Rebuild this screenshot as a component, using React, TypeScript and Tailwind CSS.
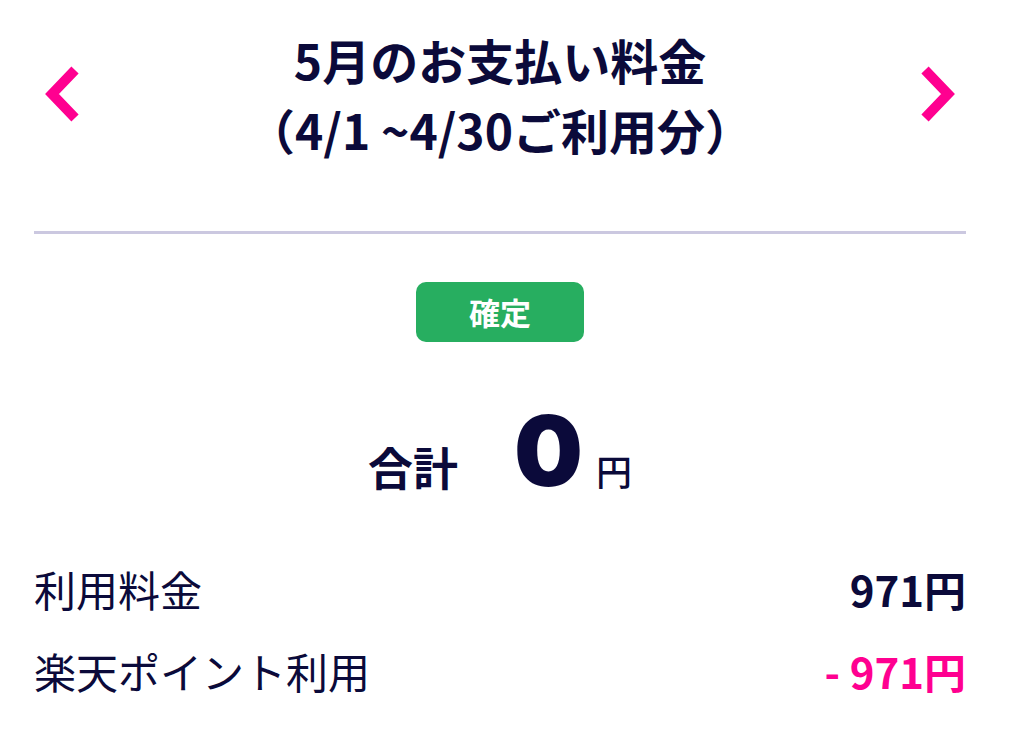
const jp = { fontFamily: '"Noto Sans CJK JP", "Noto Sans", sans-serif' }

function Chevron({ dir }: { dir: 'left' | 'right' }) {
  return (
    <svg width="40" height="56" viewBox="0 0 40 56" className="mt-[42px] shrink-0">
      <path
        d={dir === 'left' ? 'M33 4 L10 28 L33 52' : 'M7 4 L30 28 L7 52'}
        fill="none"
        stroke="#ff0090"
        strokeWidth="10"
        strokeLinejoin="miter"
      />
    </svg>
  )
}

export default function App() {
  return (
    <div className="min-h-screen bg-white text-[#0b0a3a]" style={jp}>
      <div className="pl-[34px] pr-[48px]">
        <header className="flex items-start justify-between pt-[24px] px-[8px]">
          <Chevron dir="left" />
          <div className="text-center text-[48px] font-bold leading-[70px]">
            <div>5月のお支払い料金</div>
            <div>（4/1 ~4/30ご利用分）</div>
          </div>
          <Chevron dir="right" />
        </header>

        <div className="mt-[67px] h-[3px] bg-[#cbc8e0]" />

        <div className="mt-[48px] flex justify-center">
          <div className="flex h-[60px] w-[168px] items-center justify-center rounded-[10px] bg-[#27ae60] text-[31px] font-bold text-white">
            確定
          </div>
        </div>

        <div className="mt-[60px] flex items-baseline justify-center">
          <span className="text-[45px] font-bold">合計</span>
          <span
            className="ml-[56px] text-[97px] font-black leading-none"
            style={{ fontFamily: 'Inter, "Liberation Sans", sans-serif' }}
          >
            0
          </span>
          <span className="ml-[13px] text-[36px] font-medium">円</span>
        </div>

        <div className="mt-[58px] flex flex-col gap-[22px]">
          <div className="flex items-center justify-between text-[42px] leading-[60px]">
            <span>利用料金</span>
            <span className="font-bold">971円</span>
          </div>
          <div className="flex items-center justify-between text-[42px] leading-[60px]">
            <span>楽天ポイント利用</span>
            <span className="font-bold text-[#ff0090]">- 971円</span>
          </div>
        </div>
      </div>
    </div>
  )
}
